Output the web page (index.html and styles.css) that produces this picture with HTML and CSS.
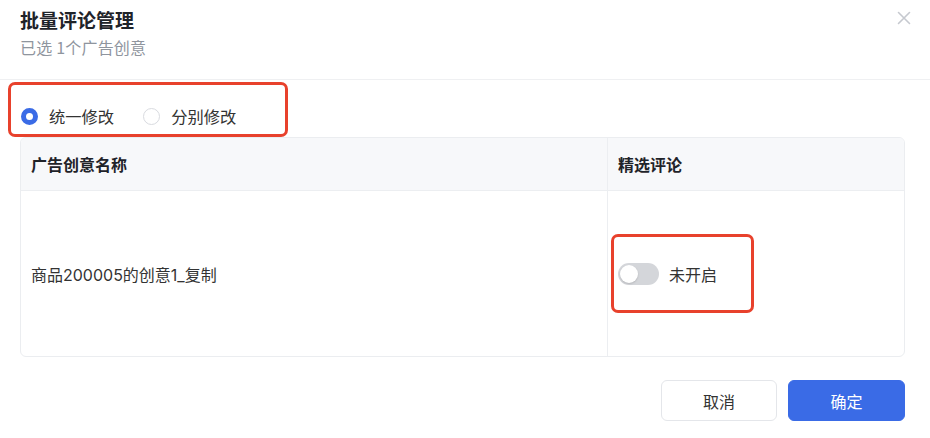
FILE: index.html
```html
<!DOCTYPE html>
<html lang="zh-CN">
<head>
<meta charset="utf-8">
<title>批量评论管理</title>
<link rel="stylesheet" href="styles.css">
</head>
<body>
<div class="dialog">
  <div class="dialog-header">
    <div class="title">批量评论管理</div>
    <div class="subtitle">已选 1个广告创意</div>
    <button class="close" aria-label="关闭">
      <svg width="14" height="14" viewBox="0 0 14 14"><path d="M1.5 1.5L12.5 12.5M12.5 1.5L1.5 12.5" stroke="#c6c9cf" stroke-width="1.6" stroke-linecap="round"/></svg>
    </button>
  </div>
  <div class="dialog-body">
    <div class="mark radio-group">
      <label class="radio checked"><span class="dot"></span><span>统一修改</span></label>
      <label class="radio"><span class="dot"></span><span>分别修改</span></label>
    </div>
    <div class="table">
      <div class="row head">
        <div class="cell c1">广告创意名称</div>
        <div class="cell c2">精选评论</div>
      </div>
      <div class="row body">
        <div class="cell c1 name">商品200005的创意1_复制</div>
        <div class="cell c2">
          <div class="mark switch-wrap">
            <span class="switch"><span class="knob"></span></span>
            <span>未开启</span>
          </div>
        </div>
      </div>
    </div>
  </div>
  <div class="dialog-footer">
    <button class="btn">取消</button>
    <button class="btn primary">确定</button>
  </div>
</div>
</body>
</html>
```

FILE: styles.css
```css
* { box-sizing: border-box; }
html, body { margin: 0; background: #fff; }
body {
  font-family: "Noto Sans CJK SC", "Noto Sans", "Liberation Sans", sans-serif;
  color: #333;
  font-size: 16px;
}
.dialog { width: 930px; height: 438px; }
.dialog-header {
  position: relative;
  padding: 8px 20px 21px;
  border-bottom: 1px solid #eff0f2;
}
.title { font-size: 19px; line-height: 24px; font-weight: 700; color: #1f2329; }
.subtitle { margin-top: 4px; font-size: 16px; line-height: 22px; color: #8f959e; letter-spacing: 0.2px; }
.close {
  position: absolute; top: 10px; right: 18px;
  border: 0; background: none; padding: 0; width: 16px; height: 16px;
  display: flex; align-items: center; justify-content: center;
}
.dialog-body { padding-top: 2px; }
.mark { border: 3px solid #e8412c; border-radius: 7px; }
.radio-group {
  margin-left: 8px; width: 280px; height: 55px;
  display: flex; align-items: flex-start; gap: 29px;
  padding: 20px 0 0 10px;
}
.radio { display: flex; align-items: center; gap: 11px; line-height: 22px; color: #333; font-size: 16.3px; }
.dot {
  width: 17px; height: 17px; border-radius: 50%;
  border: 1px solid #d9dbe0; background: #fff;
}
.radio.checked .dot { border: 5px solid #3a6be6; }
.table {
  margin: 0 25px 0 20px;
  border: 1px solid #ebedf0; border-radius: 6px; overflow: hidden;
}
.row { display: flex; }
.row.head { height: 53px; background: #f7f8fa; border-bottom: 1px solid #eceef1; font-weight: 600; color: #1f2329; }
.row.body { height: 165px; }
.cell { display: flex; align-items: center; padding-left: 10px; }
.name { font-family: "Inter", "Noto Sans CJK SC", sans-serif; font-size: 16px; }
.c1 { width: 587px; border-right: 1px solid #eceef1; }
.c2 { flex: 1; }
.row.head .c2 { padding-left: 10px; }
.row.body .c2 { padding-left: 3px; }
.switch-wrap {
  display: flex; align-items: center; gap: 10px;
  height: 79px; width: 143px; padding-left: 4px;
}
.switch {
  width: 41px; height: 22px; border-radius: 11px; background: #d4d6da;
  display: flex; align-items: center; padding-left: 2px;
}
.knob { width: 18px; height: 18px; border-radius: 50%; background: #fff; box-shadow: 0 1px 2px rgba(0,0,0,0.15); }
.dialog-footer {
  display: flex; justify-content: flex-end; gap: 11px;
  padding: 23px 25px 0 0;
}
.btn {
  width: 116px; height: 41px; border-radius: 6px;
  font-family: inherit; font-size: 16px;
  border: 1px solid #e4e6ea; background: #fff; color: #333;
}
.btn.primary { width: 117px; background: #3a6be6; border-color: #3a6be6; color: #fff; }
```
